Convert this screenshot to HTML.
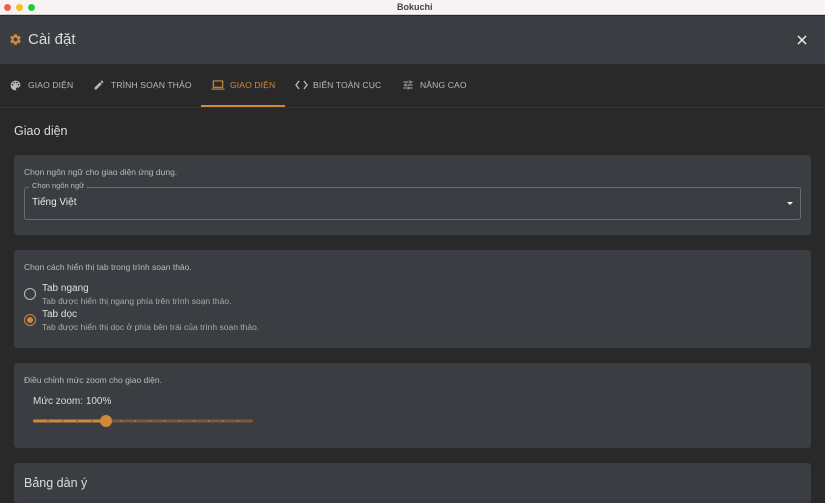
<!DOCTYPE html>
<html><head><meta charset="utf-8"><style>
*{margin:0;padding:0;box-sizing:border-box}
body{width:825px;height:488px;overflow:hidden;background:#292929;font-family:"Liberation Sans",sans-serif;color:#e0e0e0;position:relative}
.a{position:absolute}
.card{position:absolute;left:14px;width:797px;background:#3a3d41;border-radius:3px}
.t{font-size:11px;white-space:nowrap;position:absolute}
.tab{position:absolute;top:80px;font-size:8.6px;color:#b8b8b8;letter-spacing:.1px;white-space:nowrap}
</style></head><body>
<div class="a" style="left:0;top:0;width:825px;height:15px;background:#f6f3f2;border-bottom:1px solid #d0d0d0"></div>
<div class="a" style="left:4px;top:4px;width:7px;height:7px;border-radius:50%;background:#ee5f57"></div>
<div class="a" style="left:16px;top:4px;width:7px;height:7px;border-radius:50%;background:#f5bd2f"></div>
<div class="a" style="left:28px;top:4px;width:7px;height:7px;border-radius:50%;background:#2ac840"></div>
<div class="t" style="left:397px;top:2px;font-size:9px;color:#444;font-weight:bold">Bokuchi</div>
<div class="a" style="left:0;top:16px;width:825px;height:48px;background:#3a3e42"></div>
<svg class="a" style="left:9px;top:33px" width="13" height="13" viewBox="0 0 24 24"><path fill="#d0893c" d="M19.4 13c.04-.3.06-.65.06-1s-.02-.7-.06-1l2.1-1.65c.2-.15.25-.42.12-.64l-2-3.460c-.12-.22-.39-.3-.61-.22l-2.5 1c-.52-.4-1.08-.73-1.7-.98l-.38-2.65C14.4 2.18 14.2 2 14 2h-4c-.25 0-.46.18-.49.42l-.38 2.65c-.62.25-1.180.59-1.7.98l-2.49-1c-.23-.09-.49 0-.61.22l-2 3.46c-.13.22-.07.49.12.64L4.57 11c-.04.32-.07.66-.07 1s.03.68.07 1l-2.11 1.65c-.19.15-.24.42-.12.64l2 3.46c.12.22.39.3.61.22l2.49-1c.52.4 1.08.73 1.7.98l.38 2.65c.03.24.24.42.49.42h4c.25 0 .46-.18.49-.42l.38-2.65c.62-.25 1.18-.59 1.7-.98l2.49 1c.23.09.49 0 .61-.22l2-3.46c.12-.22.07-.49-.12-.64L19.4 13zM12 15.5c-1.93 0-3.5-1.57-3.5-3.5s1.57-3.5 3.5-3.5 3.5 1.57 3.5 3.5-1.57 3.5-3.5 3.5z"/></svg>
<div class="t" style="left:28px;top:31px;font-size:15px;color:#dcdcdc">Cài đặt</div>
<svg class="a" style="left:797px;top:35px" width="10" height="10" viewBox="0 0 10 10"><path d="M1 1L9 9M9 1L1 9" stroke="#eee" stroke-width="1.5"/></svg>
<div class="a" style="left:0;top:107px;width:825px;height:1px;background:#333"></div>
<svg class="a" style="left:9px;top:79px" width="13" height="13" viewBox="0 0 24 24"><path fill="#b8b8b8" d="M12 3a9 9 0 000 18c.83 0 1.5-.67 1.5-1.5 0-.39-.15-.74-.39-1.01-.23-.26-.38-.61-.38-.99 0-.83.67-1.5 1.5-1.5H16c2.760 0 5-2.24 5-5 0-4.42-4.03-8-9-8zm-5.5 9a1.5 1.5 0 110-3 1.5 1.5 0 010 3zm3-4a1.5 1.5 0 110-3 1.5 1.5 0 010 3zm5 0a1.5 1.5 0 110-3 1.5 1.5 0 010 3zm3 4a1.5 1.5 0 110-3 1.5 1.5 0 010 3z"/></svg>
<div class="tab" style="left:28px">GIAO DIỆN</div>
<svg class="a" style="left:93px;top:79px" width="12" height="12" viewBox="0 0 24 24"><path fill="#b8b8b8" d="M3 17.25V21h3.75L17.81 9.94l-3.75-3.75L3 17.25zM20.71 7.04a1 1 0 000-1.41l-2.34-2.34a1 1 0 00-1.41 0l-1.83 1.83 3.75 3.75 1.83-1.83z"/></svg>
<div class="tab" style="left:111px">TRÌNH SOẠN THẢO</div>
<svg class="a" style="left:211px;top:79px" width="14" height="12" viewBox="0 0 24 20"><path fill="none" stroke="#d0893c" stroke-width="2" d="M4 3h16v11H4z"/><path d="M1 17h22" stroke="#d0893c" stroke-width="2"/></svg>
<div class="tab" style="left:230px;color:#d0893c">GIAO DIỆN</div>
<div class="a" style="left:201px;top:105px;width:84px;height:2px;background:#d0893c"></div>
<svg class="a" style="left:295px;top:80px" width="13" height="10" viewBox="0 0 13 10"><path d="M4 1L1 5l3 4M9 1l3 4-3 4" fill="none" stroke="#b8b8b8" stroke-width="1.4"/></svg>
<div class="tab" style="left:313px">BIẾN TOÀN CỤC</div>
<svg class="a" style="left:402px;top:79px" width="12" height="12" viewBox="0 0 24 24"><path fill="#b8b8b8" d="M3 17v2h6v-2H3zM3 5v2h10V5H3zm10 16v-2h8v-2h-8v-2h-2v6h2zM7 9v2H3v2h4v2h2V9H7zm14 4v-2H11v2h10zm-6-4h2V7h4V5h-4V3h-2v6z"/></svg>
<div class="tab" style="left:420px">NÂNG CAO</div>

<div class="t" style="left:14px;top:124px;font-size:12.5px;color:#ddd">Giao diện</div>

<div class="card" style="top:155px;height:80px"></div>
<div class="t" style="left:24px;top:167px;font-size:8.5px;color:#bbb">Chọn ngôn ngữ cho giao diện ứng dụng.</div>
<div class="a" style="left:24px;top:187px;width:777px;height:33px;border:1px solid #6a6d70;border-radius:3px"></div>
<div class="t" style="left:29px;top:181px;font-size:7.5px;color:#bbb;background:#3a3d41;padding:0 3px">Chọn ngôn ngữ</div>
<div class="t" style="left:32px;top:197px;font-size:10px;color:#e8e8e8">Tiếng Việt</div>
<div class="a" style="left:787px;top:202px;width:0;height:0;border-left:3.5px solid transparent;border-right:3.5px solid transparent;border-top:3.5px solid #eee"></div>

<div class="card" style="top:250px;height:98px"></div>
<div class="t" style="left:24px;top:262px;font-size:8.5px;color:#bbb">Chọn cách hiển thị tab trong trình soạn thảo.</div>
<div class="a" style="left:24px;top:288px;width:12px;height:12px;border:1.5px solid #bbb;border-radius:50%"></div>
<div class="t" style="left:42px;top:283px;font-size:10px;color:#e0e0e0">Tab ngang</div>
<div class="t" style="left:42px;top:296px;font-size:8.5px;color:#aaa">Tab được hiển thị ngang phía trên trình soạn thảo.</div>
<div class="a" style="left:24px;top:314px;width:12px;height:12px;border:1.5px solid #d0893c;border-radius:50%"></div>
<div class="a" style="left:27px;top:317px;width:6px;height:6px;background:#d0893c;border-radius:50%"></div>
<div class="t" style="left:42px;top:309px;font-size:10px;color:#e0e0e0">Tab dọc</div>
<div class="t" style="left:42px;top:322px;font-size:8.5px;color:#aaa">Tab được hiển thị dọc ở phía bên trái của trình soạn thảo.</div>

<div class="card" style="top:363px;height:85px"></div>
<div class="t" style="left:24px;top:375px;font-size:8.5px;color:#bbb">Điều chỉnh mức zoom cho giao diện.</div>
<div class="t" style="left:33px;top:396px;font-size:10px;color:#ddd">Mức zoom: 100%</div>
<svg class="a" style="left:30px;top:412px" width="228" height="18" viewBox="0 0 228 18">
<rect x="3" y="7.5" width="220" height="3" rx="1.5" fill="#7a5a38"/>
<rect x="3" y="7.5" width="73" height="3" rx="1.5" fill="#d0893c"/>
<g fill="#5a4a3a"><circle cx="18" cy="9" r=".7"/><circle cx="32.6" cy="9" r=".7"/><circle cx="47.2" cy="9" r=".7"/><circle cx="61.8" cy="9" r=".7"/></g>
<g fill="#c48a4a"><circle cx="91" cy="9" r=".7"/><circle cx="105.6" cy="9" r=".7"/><circle cx="120.2" cy="9" r=".7"/><circle cx="134.8" cy="9" r=".7"/><circle cx="149.4" cy="9" r=".7"/><circle cx="164" cy="9" r=".7"/><circle cx="178.6" cy="9" r=".7"/><circle cx="193.2" cy="9" r=".7"/><circle cx="207.8" cy="9" r=".7"/></g>
<circle cx="76" cy="9" r="6" fill="#d0893c"/>
</svg>

<div class="card" style="top:463px;height:40px"></div>
<div class="t" style="left:24px;top:476px;font-size:12.5px;color:#ddd">Bảng dàn ý</div>
</body></html>
